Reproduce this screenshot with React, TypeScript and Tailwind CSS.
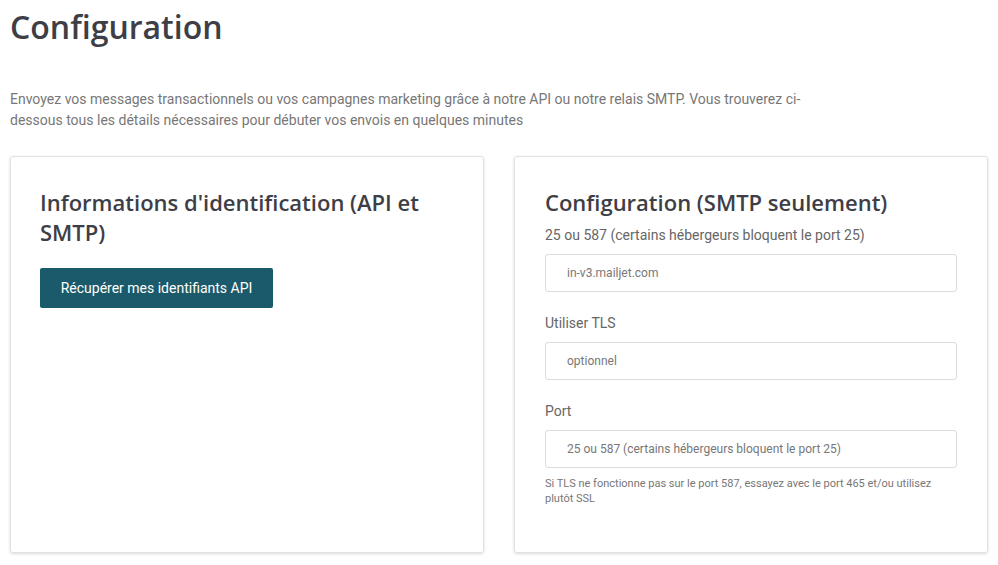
const sans = { fontFamily: "Roboto, 'Liberation Sans', sans-serif" }
const head = { fontFamily: "'Open Sans', 'Liberation Sans', sans-serif" }

function Field({ label, value }: { label: string; value: string }) {
  return (
    <div>
      <div className="text-[14px] leading-[20px] text-[#666]">{label}</div>
      <div className="mt-[9px] h-[38px] rounded-[3px] border border-[#dcdcdc] flex items-center pl-[21px] text-[12px] text-[#777]">
        {value}
      </div>
    </div>
  )
}

export default function App() {
  return (
    <div className="w-[998px] h-[565px] overflow-hidden bg-white" style={sans}>
      <div className="px-[10px]">
        <h1 className="pt-[6px] text-[32px] leading-[42px] font-semibold text-[#3e3e46]" style={head}>
          Configuration
        </h1>
        <p className="mt-[41px] w-[820px] text-[14px] leading-[21px] text-[#777]">
          Envoyez vos messages transactionnels ou vos campagnes marketing grâce à notre API ou notre relais SMTP. Vous trouverez ci-dessous tous les détails nécessaires pour débuter vos envois en quelques minutes
        </p>
        <div className="mt-[25px] grid grid-cols-2 gap-[30px] pr-[0px]">
          <div className="h-[397px] rounded-[3px] border border-[#e2e2e2] shadow-[0_1px_3px_rgba(0,0,0,0.15)] px-[29px] pt-[30px]">
            <h2 className="text-[22px] leading-[30px] font-semibold text-[#3e3e46] w-[400px]" style={head}>
              Informations d'identification (API et SMTP)
            </h2>
            <button className="mt-[21px] h-[40px] w-[233px] rounded-[2px] bg-[#1b5a6a] text-white text-[14px]">
              Récupérer mes identifiants API
            </button>
          </div>
          <div className="h-[397px] rounded-[3px] border border-[#e2e2e2] shadow-[0_1px_3px_rgba(0,0,0,0.15)] px-[30px] pt-[30px]">
            <h2 className="text-[22px] leading-[30px] font-semibold text-[#3e3e46]" style={head}>
              Configuration (SMTP seulement)
            </h2>
            <div className="mt-[8px] flex flex-col gap-[21px]">
              <Field label="25 ou 587 (certains hébergeurs bloquent le port 25)" value="in-v3.mailjet.com" />
              <Field label="Utiliser TLS" value="optionnel" />
              <Field label="Port" value="25 ou 587 (certains hébergeurs bloquent le port 25)" />
            </div>
            <p className="mt-[8px] text-[11px] leading-[15px] text-[#777] w-[390px]">
              Si TLS ne fonctionne pas sur le port 587, essayez avec le port 465 et/ou utilisez plutôt SSL
            </p>
          </div>
        </div>
      </div>
    </div>
  )
}
